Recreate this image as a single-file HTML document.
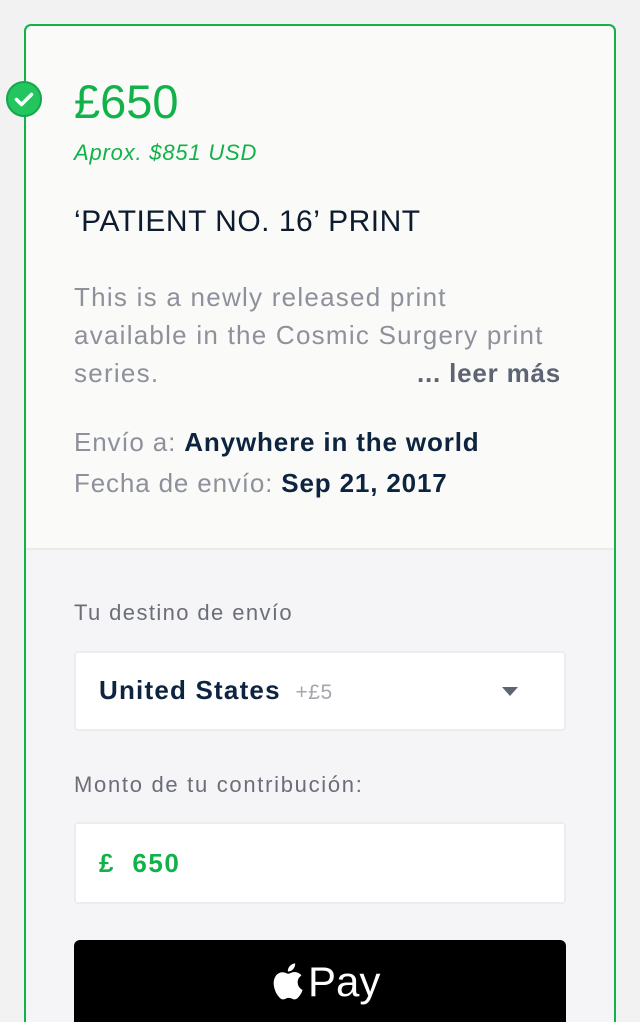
<!DOCTYPE html>
<html><head><meta charset="utf-8"><style>
*{margin:0;padding:0;box-sizing:border-box}
html{width:640px;height:1022px;overflow:hidden}
body{width:640px;height:1022px;background:#f2f2f2;font-family:"Liberation Sans",Arial,sans-serif;position:relative;overflow:hidden}
.card{position:absolute;left:24px;top:24px;width:592px;height:998px;border:2px solid #11b24a;border-bottom:none;border-radius:7px 7px 0 0;background:#fafaf8;overflow:hidden}
.bot{position:absolute;left:0;right:0;top:522px;bottom:0;background:#f5f5f7;border-top:2px solid #ebebeb}
.t{position:absolute;white-space:nowrap}
.box{position:absolute;left:48px;width:492px;background:#fff;border:2px solid #ececec;border-radius:4px}
</style></head><body>
<div class="card">
<div class="t" style="left:48px;top:48px;font-size:47px;color:#11b24a">£650</div>
<div class="t" style="left:48px;top:114px;font-size:22px;letter-spacing:0.8px;font-style:italic;color:#11b24a">Aprox. $851 USD</div>
<div class="t" style="left:48px;top:179px;font-size:30px;letter-spacing:0.5px;color:#0d1b2e">‘PATIENT NO. 16’ PRINT</div>
<div class="t" style="left:48px;top:252px;font-size:26px;letter-spacing:1.25px;line-height:38px;color:#8e919b">This is a newly released print<br>available in the Cosmic Surgery print<br>series.</div>
<div class="t" style="left:391px;top:328px;font-size:26px;letter-spacing:0.8px;line-height:38px;font-weight:bold;color:#5f6474">... leer más</div>
<div class="t" style="left:48px;top:396px;font-size:26px;letter-spacing:0.85px;line-height:41px;color:#8e919b">Envío a: <b style="color:#0d2440">Anywhere in the world</b><br>Fecha de envío: <b style="color:#0d2440">Sep 21, 2017</b></div>
<div class="bot">
<div class="t" style="left:48px;top:50px;font-size:22px;letter-spacing:1.4px;color:#6b6e78">Tu destino de envío</div>
<div class="box" style="top:101px;height:80px">
<div class="t" style="left:23px;top:22px;font-size:26px;letter-spacing:1.2px;font-weight:bold;color:#0d2440">United States <span style="font-weight:normal;font-size:21px;letter-spacing:0.5px;color:#a5a7ae">&nbsp;+£5</span></div>
<div style="position:absolute;left:426px;top:34px;width:0;height:0;border-left:8px solid transparent;border-right:8px solid transparent;border-top:9px solid #5f6474"></div>
</div>
<div class="t" style="left:48px;top:222px;font-size:22px;letter-spacing:1.7px;color:#6b6e78">Monto de tu contribución:</div>
<div class="box" style="top:272px;height:82px">
<div class="t" style="left:23px;top:24px;font-size:26px;letter-spacing:1.5px;font-weight:bold;color:#11b24a">£&nbsp; 650</div>
</div>
<div style="position:absolute;left:48px;top:390px;width:492px;height:100px;background:#000;border-radius:6px">
<svg style="position:absolute;left:196px;top:22px" width="34" height="38" viewBox="0 0 17 20"><path fill="#fff" d="M14.1 10.6c0-2.3 1.9-3.4 2-3.5-1.1-1.6-2.8-1.8-3.4-1.8-1.4-.1-2.8.9-3.5.9-.7 0-1.8-.8-3-.8C4.6 5.4 3.1 6.3 2.3 7.8c-1.700 2.900-.4 7.200 1.200 9.600.8 1.100 1.700 2.400 3 2.300 1.200-.1 1.600-.8 3-.8s1.800.8 3 .8c1.300 0 2.100-1.200 2.900-2.300.9-1.300 1.300-2.600 1.300-2.700 0 0-2.600-1-2.600-4.100zM11.800 3.700c.6-.8 1.100-1.900 1-3-1 0-2.100.6-2.800 1.400-.6.700-1.200 1.800-1 2.900 1.100.1 2.200-.5 2.800-1.300z"/></svg>
<div class="t" style="left:234px;top:18px;font-size:42px;color:#fff;font-weight:300">Pay</div>
</div>
</div>
</div>
<svg style="position:absolute;left:6px;top:81px" width="36" height="36" viewBox="0 0 36 36"><circle cx="18" cy="18" r="17" fill="#22c55e" stroke="#13a74a" stroke-width="2"/><path d="M10.5 18.5l5 5 10-10" fill="none" stroke="#fff" stroke-width="3.6" stroke-linecap="round" stroke-linejoin="round"/></svg>
</body></html>
